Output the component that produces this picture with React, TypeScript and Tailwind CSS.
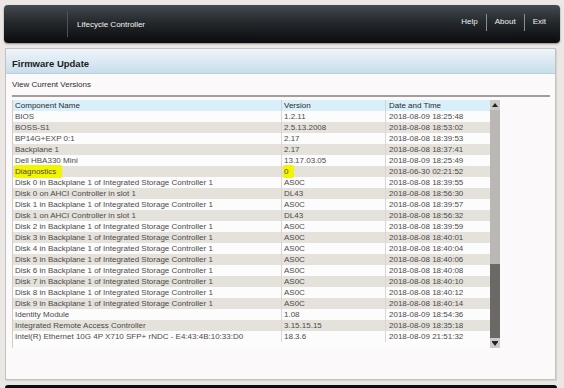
import React from "react";

// Firmware inventory shown in the table
const rows: [string, string, string][] = [
  ["BIOS", "1.2.11", "2018-08-09 18:25:48"],
  ["BOSS-S1", "2.5.13.2008", "2018-08-08 18:53:02"],
  ["BP14G+EXP 0:1", "2.17", "2018-08-08 18:39:53"],
  ["Backplane 1", "2.17", "2018-08-08 18:37:41"],
  ["Dell HBA330 Mini", "13.17.03.05", "2018-08-09 18:25:49"],
  ["Diagnostics", "0", "2018-06-30 02:21:52"],
  ["Disk 0 in Backplane 1 of Integrated Storage Controller 1", "AS0C", "2018-08-08 18:39:55"],
  ["Disk 0 on AHCI Controller in slot 1", "DL43", "2018-08-08 18:56:30"],
  ["Disk 1 in Backplane 1 of Integrated Storage Controller 1", "AS0C", "2018-08-08 18:39:57"],
  ["Disk 1 on AHCI Controller in slot 1", "DL43", "2018-08-08 18:56:32"],
  ["Disk 2 in Backplane 1 of Integrated Storage Controller 1", "AS0C", "2018-08-08 18:39:59"],
  ["Disk 3 in Backplane 1 of Integrated Storage Controller 1", "AS0C", "2018-08-08 18:40:01"],
  ["Disk 4 in Backplane 1 of Integrated Storage Controller 1", "AS0C", "2018-08-08 18:40:04"],
  ["Disk 5 in Backplane 1 of Integrated Storage Controller 1", "AS0C", "2018-08-08 18:40:06"],
  ["Disk 6 in Backplane 1 of Integrated Storage Controller 1", "AS0C", "2018-08-08 18:40:08"],
  ["Disk 7 in Backplane 1 of Integrated Storage Controller 1", "AS0C", "2018-08-08 18:40:10"],
  ["Disk 8 in Backplane 1 of Integrated Storage Controller 1", "AS0C", "2018-08-08 18:40:12"],
  ["Disk 9 in Backplane 1 of Integrated Storage Controller 1", "AS0C", "2018-08-08 18:40:14"],
  ["Identity Module", "1.08", "2018-08-09 18:54:36"],
  ["Integrated Remote Access Controller", "3.15.15.15", "2018-08-09 18:35:18"],
  ["Intel(R) Ethernet 10G 4P X710 SFP+ rNDC - E4:43:4B:10:33:D0", "18.3.6", "2018-08-09 21:51:32"],
];

function Marked({ children }: { children: React.ReactNode }) {
  return (
    <span className="bg-[#f2f400] -ml-[1px] pl-[1px] pr-[6px] py-[2px] rounded-[2px]">{children}</span>
  );
}

function Scrollbar() {
  return (
    <div className="w-[10px] h-[248px] flex flex-col bg-[#bbb7b4]">
      <div className="h-[10px] bg-[#cdc9c6] flex items-center justify-center">
        <svg width="6" height="5" viewBox="0 0 6 5">
          <path d="M3 0 L6 4 L0 4 Z" fill="#222" />
        </svg>
      </div>
      <div className="h-[154px]" />
      <div className="h-[74px] bg-[#6c6865]" />
      <div className="h-[10px] bg-[#cdc9c6] flex items-center justify-center">
        <svg width="6" height="5" viewBox="0 0 6 5">
          <path d="M0 0 H6 V1 H0 Z M0 1 L6 1 L3 5 Z" fill="#222" />
        </svg>
      </div>
    </div>
  );
}

export default function App() {
  return (
    <div className="w-[564px] h-[388px] overflow-hidden bg-[#ebe7e4] pt-[5px] px-[4px] font-['Liberation_Sans',Arial,sans-serif]">
      {/* top bar */}
      <header className="h-[38px] rounded-[4px] bg-gradient-to-b from-[#434a51] via-[#22262a] to-[#0b0b0e] flex items-center shadow-[0_1px_2px_rgba(0,0,0,0.4)]">
        <div className="w-[64px] h-[26px] border-r border-[#4d5358]" />
        <span className="ml-[9px] mt-[1px] text-[8px] leading-[10px] text-[#f4f4f4]">Lifecycle Controller</span>
        <nav className="ml-auto mr-[6px] mb-[4px] flex items-center text-[8px] leading-[10px] text-[#eeeeee]">
          <span className="px-[8px]">Help</span>
          <span className="w-px h-[17px] bg-[#8a8f94]" />
          <span className="px-[8px]">About</span>
          <span className="w-px h-[17px] bg-[#8a8f94]" />
          <span className="px-[8px]">Exit</span>
        </nav>
      </header>

      {/* firmware panel */}
      <section className="mt-[5px] ml-[1px] w-[551px] h-[332px] border border-[#c4c1bf] bg-[#fcf9fa] shadow-[1px_1px_1px_rgba(0,0,0,0.08)]">
        <div className="h-[25px] pt-[9px] pl-[6px] bg-gradient-to-b from-[#f0f4fb] to-[#c8deeb] border-b border-[#b9d0de] text-[9.5px] leading-[11px] font-bold text-[#1c1c1c]">
          Firmware Update
        </div>
        <div className="mt-[6px] ml-[6px] text-[8px] leading-[10px] text-[#2e2e2e]">View Current Versions</div>
        <div className="mt-[5px] ml-[6px] w-[538px] h-[2px] bg-[#a29e9b]" />

        <div className="mt-[3px] ml-[6px] flex">
          <div className="w-[478px] h-[248px] flex flex-col border-l border-[#d0ccc9] text-[8px] leading-[11px]">
            <div className="h-[11px] flex bg-[#d9eff9] text-[#2a2a2a]">
              <div className="w-[269px] pl-[2px] border-r border-[#c4dbe6]">Component Name</div>
              <div className="w-[104px] pl-[2px] border-r border-[#c4dbe6]">Version</div>
              <div className="flex-1 pl-[3px]">Date and Time</div>
            </div>
            <div className="flex-1 bg-[#fdfcfc]">
              {rows.map(([name, version, date], i) => (
                <div
                  key={name}
                  className={`h-[11px] flex text-[#4b4b4b] ${i % 2 === 1 ? "bg-[#e5e1db]" : "bg-[#fdfcfc]"}`}
                >
                  <div className="w-[269px] pl-[2px] border-r border-[#dad6d2] whitespace-nowrap">
                    {name === "Diagnostics" ? <Marked>{name}</Marked> : name}
                  </div>
                  <div className="w-[104px] pl-[2px] border-r border-[#dad6d2]">
                    {name === "Diagnostics" ? <Marked>{version}</Marked> : version}
                  </div>
                  <div className="flex-1 pl-[3px]">{date}</div>
                </div>
              ))}
            </div>
          </div>
          <Scrollbar />
        </div>
      </section>

      {/* next window peeking in at the bottom */}
      <div className="mt-[5px] ml-[1px] w-[552px] h-[10px] rounded-t-[3px] bg-[#0c0c0e]" />
    </div>
  );
}
